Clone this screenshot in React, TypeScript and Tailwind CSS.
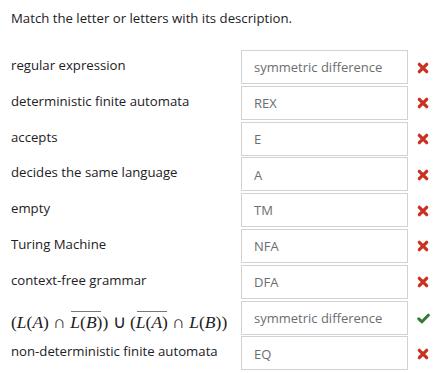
type Row = {
  label: React.ReactNode;
  answer: string;
  ok: boolean;
};

const Ov = ({ children }: { children: React.ReactNode }) => (
  <span className="relative inline-block">
    <span className="absolute left-[1px] right-[1px] top-[-3px] h-[1px] bg-[#777]" />
    {children}
  </span>
);

const I = ({ children }: { children: React.ReactNode }) => <span className="italic">{children}</span>;

const MathLabel = () => (
  <span className="font-['Liberation_Serif',serif] text-[17.5px] leading-none text-[#1d2125] whitespace-nowrap">
    (<I>L</I>(<I>A</I>) ∩ <Ov><I>L</I>(<I>B</I>)</Ov>) ∪ (<Ov><I>L</I>(<I>A</I>)</Ov> ∩ <I>L</I>(<I>B</I>))
  </span>
);

const Cross = () => (
  <svg width="12" height="12" viewBox="0 0 12 12" className="text-[#ca3120]">
    <path d="M2.3 2.3 L9.7 9.7 M9.7 2.3 L2.3 9.7" stroke="currentColor" strokeWidth="3.2" strokeLinecap="round" />
  </svg>
);

const Check = () => (
  <svg width="13" height="11" viewBox="0 0 13 11" className="text-[#357a32]">
    <path d="M1.8 5.8 L5 8.8 L11.3 2.2" stroke="currentColor" strokeWidth="3" fill="none" strokeLinecap="round" strokeLinejoin="round" />
  </svg>
);

const rows: Row[] = [
  { label: "regular expression", answer: "symmetric difference", ok: false },
  { label: "deterministic finite automata", answer: "REX", ok: false },
  { label: "accepts", answer: "E", ok: false },
  { label: "decides the same language", answer: "A", ok: false },
  { label: "empty", answer: "TM", ok: false },
  { label: "Turing Machine", answer: "NFA", ok: false },
  { label: "context-free grammar", answer: "DFA", ok: false },
  { label: <MathLabel />, answer: "symmetric difference", ok: true },
  { label: "non-deterministic finite automata", answer: "EQ", ok: false },
];

export default function App() {
  return (
    <main className="w-[438px] h-[373px] bg-white font-['Open_Sans',sans-serif] text-[#1d2125] overflow-hidden">
      <p className="pl-[11px] pt-[8px] text-[13.2px] leading-[20px]">Match the letter or letters with its description.</p>
      <div className="mt-[22px] flex flex-col gap-[1.8px]">
        {rows.map((r, i) => (
          <div key={i} className="flex items-start h-[34px]">
            <div
              className={
                typeof r.label === "string"
                  ? "w-[241px] pl-[11px] pt-[5px] text-[13.2px] leading-[20px]"
                  : "w-[241px] pl-[11px] pt-[9px]"
              }
            >
              {r.label}
            </div>
            <div className="w-[167px] h-[34px] border border-[#cfd3d6] flex items-center pl-[12px] pt-[2px] text-[13px] text-[#6a6e72]">
              {r.answer}
            </div>
            <div className="flex-1 flex justify-center items-center h-[34px] pt-[1px]">
              {r.ok ? <Check /> : <Cross />}
            </div>
          </div>
        ))}
      </div>
    </main>
  );
}
